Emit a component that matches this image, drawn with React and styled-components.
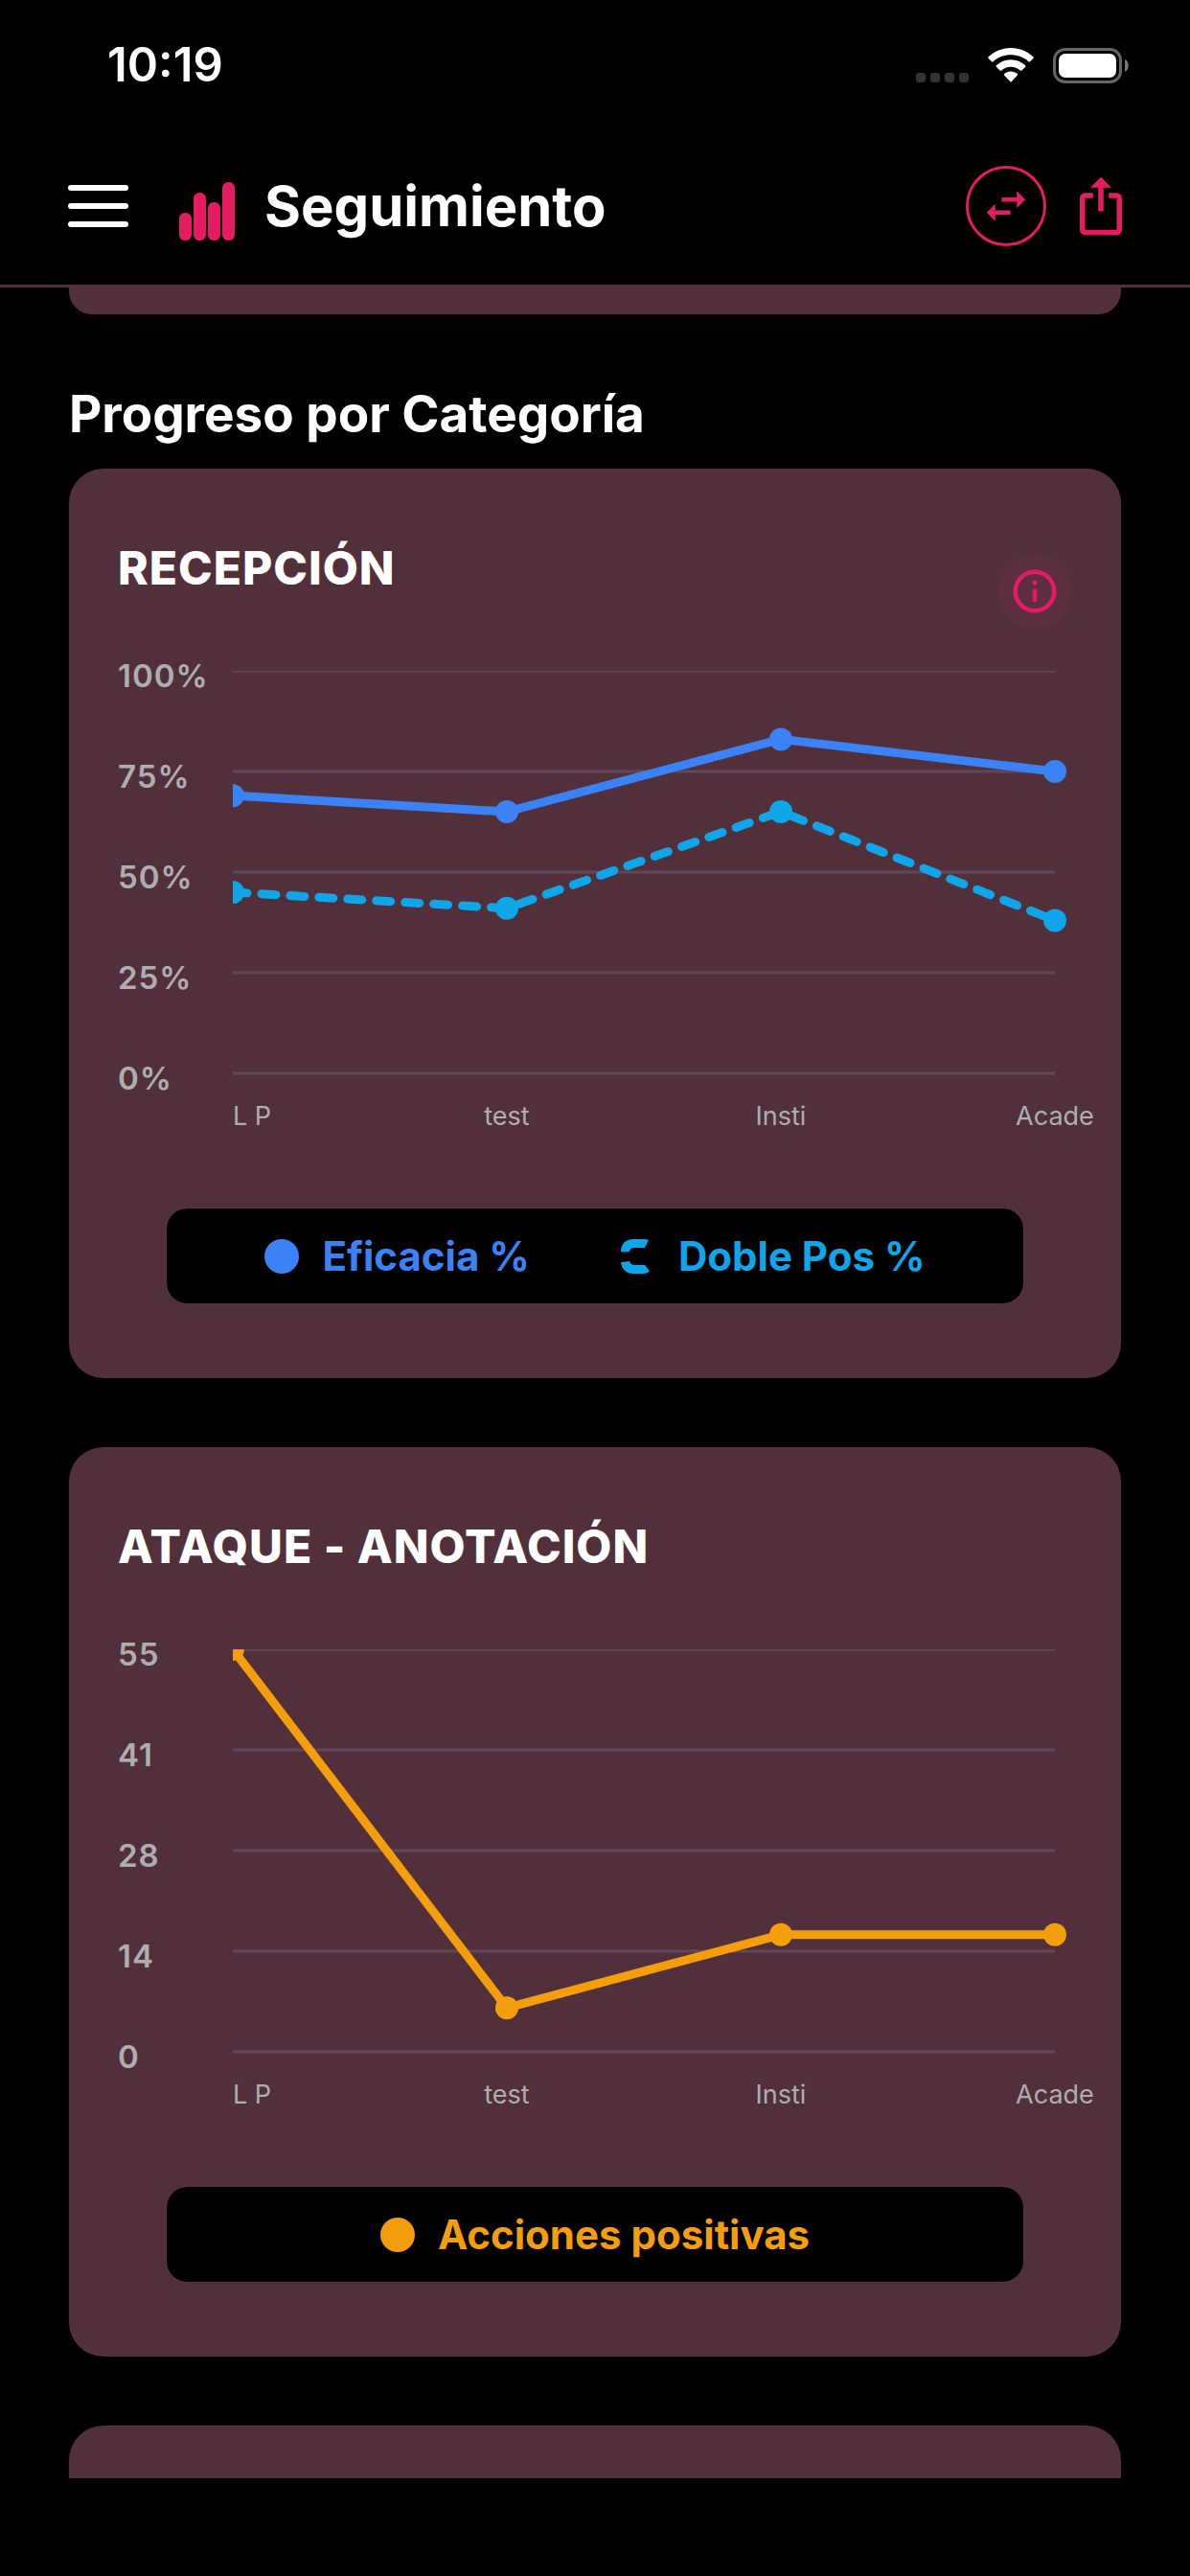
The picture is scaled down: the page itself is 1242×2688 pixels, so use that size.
import React, { useId } from "react";
import styled, { createGlobalStyle } from "styled-components";
import { MdInfoOutline, MdSwapHoriz } from "react-icons/md";

const colors = {
  background: "#000000",
  card: "#51303c",
  accent: "#e31c63",
  accentSoft: "#5d2d40",
  text: "#ffffff",
  label: "#aeaeae",
  grid: "#604858",
  blue: "#3b82f6",
  cyan: "#0ea5e9",
  amber: "#f59e0b",
};

const fonts = {
  primary: "Inter, Roboto, 'Liberation Sans', sans-serif",
};

const GlobalStyle = createGlobalStyle`
  * {
    box-sizing: border-box;
  }
  body {
    margin: 0;
    background: ${colors.background};
    color: ${colors.text};
    font-family: ${fonts.primary};
  }
`;

const Page = styled.div`
  display: flex;
  flex-direction: column;
  min-height: 100vh;
  background: ${colors.background};
`;

const StatusBar = styled.div`
  display: flex;
  align-items: center;
  justify-content: space-between;
  height: 132px;
  padding: 4px 64px 0 112px;
`;

const Time = styled.span`
  font-size: 49px;
  font-weight: 600;
  line-height: 58px;
`;

const StatusIcons = styled.div`
  display: flex;
  align-items: center;
  gap: 20px;
`;

const Header = styled.header`
  display: flex;
  align-items: center;
  justify-content: space-between;
  height: 168px;
  padding: 0 60px;
  border-bottom: 3px solid ${colors.card};
`;

const Brand = styled.div`
  display: flex;
  align-items: center;
`;

const IconButton = styled.button`
  display: flex;
  padding: 0;
  border: none;
  background: none;
  color: ${(p) => p.$color || colors.accent};
  cursor: pointer;
`;

const RoundButton = styled(IconButton)`
  align-items: center;
  justify-content: center;
  width: 84px;
  height: 84px;
  border: 3px solid ${colors.accent};
  border-radius: 50%;
`;

const InfoButton = styled(IconButton)`
  align-self: flex-end;
  align-items: center;
  justify-content: center;
  width: 78px;
  height: 78px;
  border-radius: 50%;
  background: ${colors.accentSoft};
`;

const Logo = styled.svg`
  margin: 0 31px 0 43px;
`;

const Title = styled.h1`
  margin: 0;
  font-size: 58px;
  font-weight: 700;
  line-height: 72px;
`;

const Actions = styled.div`
  display: flex;
  align-items: center;
  gap: 24px;
`;

const Content = styled.main`
  flex: 1;
  display: flex;
  flex-direction: column;
  padding: 0 72px;
`;

const PreviousCard = styled.div`
  height: 28px;
  margin-bottom: 72px;
  border-radius: 0 0 24px 24px;
  background: ${colors.card};
  box-shadow: 0 6px 24px rgba(227, 28, 99, 0.05);
`;

const SectionTitle = styled.h2`
  margin: 0 0 24px;
  font-size: 53px;
  font-weight: 700;
  line-height: 65px;
`;

const Card = styled.section`
  margin-bottom: 72px;
  padding: 75px 51px;
  border-radius: 36px;
  background: ${colors.card};
`;

const NextCard = styled.div`
  flex: 1;
  min-height: 55px;
  border-radius: 36px 36px 0 0;
  background: ${colors.card};
`;

const CardHeader = styled.div`
  display: flex;
  justify-content: space-between;
  min-height: 92px;
`;

const CardTitle = styled.h3`
  margin: 0;
  font-size: 48px;
  font-weight: 800;
  line-height: 58px;
  letter-spacing: 1px;
`;

const ChartSvg = styled.svg`
  display: block;
  width: 100%;
  margin: 34px 0 68px;
  overflow: visible;
`;

const YLabel = styled.text`
  fill: ${colors.label};
  font-size: 33px;
  font-weight: 600;
  letter-spacing: 1px;
`;

const XLabel = styled.text`
  fill: ${colors.label};
  font-size: 27px;
`;

const Legend = styled.ul`
  display: flex;
  align-items: center;
  justify-content: center;
  gap: 95px;
  height: 105px;
  margin: 0 48px;
  padding: 0;
  border: 3px solid ${colors.card};
  border-radius: 24px;
  background: ${colors.background};
  background-clip: padding-box;
  box-shadow: 0 3px 12px rgba(0, 0, 0, 0.06);
  list-style: none;
`;

const LegendItem = styled.li`
  display: flex;
  align-items: center;
  gap: 24px;
  color: ${(p) => p.$color};
  font-size: 42px;
  font-weight: 700;
  line-height: 50px;
`;

const Footer = styled.footer`
  height: 102px;
`;

const MenuIcon = () => (
  <svg width="84" height="84" viewBox="0 0 84 84" fill="currentColor">
    <rect x="11" y="20" width="63" height="6" rx="3" />
    <rect x="11" y="39" width="63" height="6" rx="3" />
    <rect x="11" y="58" width="63" height="6" rx="3" />
  </svg>
);

const BarsLogo = () => (
  <Logo width="58" height="72" viewBox="0 0 58 72" fill={colors.accent} aria-hidden="true">
    <rect x="0" y="43" width="13" height="29" rx="6" />
    <rect x="15" y="22" width="13" height="50" rx="6" />
    <rect x="30" y="32" width="13" height="40" rx="6" />
    <rect x="45" y="11" width="13" height="61" rx="6" />
  </Logo>
);

const ShareIcon = () => (
  <svg width="66" height="66" viewBox="0 0 24 24" fill="currentColor">
    <path d="M12 1L8 5h3v9h2V5h3M18 23H6c-1.11 0-2-.9-2-2V9a2 2 0 0 1 2-2h3v2H6v12h12V9h-3V7h3a2 2 0 0 1 2 2v12a2 2 0 0 1-2 2z" />
  </svg>
);

const SignalIcon = () => (
  <svg width="55" height="37" viewBox="0 0 55 37" fill="#333333">
    <rect x="0" y="26" width="10" height="10" rx="3" />
    <rect x="15" y="26" width="10" height="10" rx="3" />
    <rect x="30" y="26" width="10" height="10" rx="3" />
    <rect x="45" y="26" width="10" height="10" rx="3" />
  </svg>
);

const WifiIcon = () => (
  <svg width="48" height="37" viewBox="0 0 48 37" fill="#fff">
    <path d="M24 0C33 0 41 3.500 47.300 9.200c.6.600.6 1.200 0 1.800l-3.200 3.200c-.5.500-1.200.5-1.700 0C37.500 9.800 31 7.300 24 7.300S10.500 9.800 5.600 14.200c-.5.500-1.200.5-1.700 0L.7 11c-.6-.6-.6-1.200 0-1.800C7 3.500 15 0 24 0z" />
    <path d="M24 12.300c5.800 0 11 2.200 15 5.800.6.600.6 1.200 0 1.800l-3.600 3.600c-.5.500-1.100.5-1.600.1C31.200 21.200 27.800 19.800 24 19.800s-7.200 1.400-9.800 3.800c-.5.400-1.100.4-1.600-.1L9 19.900c-.6-.6-.6-1.200 0-1.800 4-3.600 9.200-5.800 15-5.800z" />
    <path d="M24 24.500c2.600 0 4.900.9 6.700 2.500.6.600.6 1.200 0 1.800l-5.800 6.200c-.5.600-1.300.6-1.800 0l-5.800-6.200c-.6-.6-.6-1.200 0-1.800 1.800-1.600 4.100-2.500 6.700-2.500z" />
  </svg>
);

const BatteryIcon = () => (
  <svg width="79" height="37" viewBox="0 0 79 37">
    <rect x="1.500" y="1.500" width="69" height="34" rx="11" fill="none" stroke="#666" strokeWidth="3" />
    <rect x="6" y="6" width="60" height="25" rx="7" fill="#fff" />
    <path d="M75 12c5 2 5 11 0 13z" fill="#777" />
  </svg>
);

const LegendMark = ({ dashed }) => (
  <svg width="36" height="36" viewBox="0 0 36 36" fill="currentColor" aria-hidden="true">
    {dashed ? (
      <>
        <path d="M0 13.300C0 5 5 0 13 0h10c2.500 0 4.500.3 6 1l-4 8H14c-3 0-5 1.800-5 4.300z" />
        <path d="M0 24.200C1 31.500 6 36 13 36h9c3 0 6-.8 8-2.300L25.200 27H14c-2.500 0-4.300-1.500-5-4z" />
      </>
    ) : (
      <circle cx="18" cy="18" r="18" />
    )}
  </svg>
);

// Plot area inside the chart's own coordinates
const PLOT = { left: 120, top: 10, width: 858, height: 420 };

const Chart = ({ title, max, ticks, labels, series }) => {
  const clipId = useId();
  const step = PLOT.width / (labels.length - 1);
  const x = (i) => PLOT.left + i * step;
  const y = (value) => PLOT.top + PLOT.height * (1 - value / max);

  return (
    <ChartSvg viewBox="0 0 996 500" role="img" aria-label={title}>
      <clipPath id={clipId}>
        <rect x={PLOT.left} y={PLOT.top} width={PLOT.width + 18} height={PLOT.height + 18} />
      </clipPath>
      {ticks.map((tick, i) => (
        <YLabel key={tick} x="0" y={27 + (i * PLOT.height) / (ticks.length - 1)}>
          {tick}
        </YLabel>
      ))}
      <g clipPath={`url(#${clipId})`}>
        {ticks.map((tick, i) => {
          const lineY = PLOT.top + (i * PLOT.height) / (ticks.length - 1);
          return (
            <line
              key={tick}
              x1={PLOT.left}
              x2={PLOT.left + PLOT.width}
              y1={lineY}
              y2={lineY}
              stroke={colors.grid}
              strokeWidth="3"
            />
          );
        })}
        {series.map((s) => (
          <g key={s.name}>
            <polyline
              points={s.values.map((v, i) => `${x(i)},${y(v)}`).join(" ")}
              fill="none"
              stroke={s.color}
              strokeWidth="9"
              strokeLinecap="round"
              strokeLinejoin="round"
              strokeDasharray={s.dashed ? "15 15" : undefined}
            />
            {s.values.map((v, i) => (
              <circle key={i} cx={x(i)} cy={y(v)} r="12" fill={s.color} />
            ))}
          </g>
        ))}
      </g>
      {labels.map((label, i) => (
        <XLabel key={label} x={x(i)} y="484" textAnchor={i === 0 ? "start" : "middle"}>
          {label}
        </XLabel>
      ))}
    </ChartSvg>
  );
};

const ChartCard = ({ title, info, ...chart }) => (
  <Card>
    <CardHeader>
      <CardTitle>{title}</CardTitle>
      {info && (
        <InfoButton type="button" aria-label="Información">
          <MdInfoOutline size={54} />
        </InfoButton>
      )}
    </CardHeader>
    <Chart title={title} {...chart} />
    <Legend>
      {chart.series.map((s) => (
        <LegendItem key={s.name} $color={s.color}>
          <LegendMark dashed={s.dashed} />
          {s.name}
        </LegendItem>
      ))}
    </Legend>
  </Card>
);

const matches = ["L P", "test", "Insti", "Acade"];

const charts = [
  {
    title: "RECEPCIÓN",
    info: true,
    max: 100,
    ticks: ["100%", "75%", "50%", "25%", "0%"],
    series: [
      { name: "Eficacia %", color: colors.blue, values: [69, 65, 83, 75] },
      { name: "Doble Pos %", color: colors.cyan, values: [45, 41, 65, 38], dashed: true },
    ],
  },
  {
    title: "ATAQUE - ANOTACIÓN",
    max: 55,
    ticks: ["55", "41", "28", "14", "0"],
    series: [{ name: "Acciones positivas", color: colors.amber, values: [55, 6, 16, 16] }],
  },
];

const App = () => (
  <>
    <GlobalStyle />
    <Page>
      <StatusBar>
        <Time>10:19</Time>
        <StatusIcons>
          <SignalIcon />
          <WifiIcon />
          <BatteryIcon />
        </StatusIcons>
      </StatusBar>
      <Header>
        <Brand>
          <IconButton type="button" aria-label="Menú" $color={colors.text}>
            <MenuIcon />
          </IconButton>
          <BarsLogo />
          <Title>Seguimiento</Title>
        </Brand>
        <Actions>
          <RoundButton type="button" aria-label="Cambiar">
            <MdSwapHoriz size={54} />
          </RoundButton>
          <IconButton type="button" aria-label="Compartir">
            <ShareIcon />
          </IconButton>
        </Actions>
      </Header>
      <Content>
        <PreviousCard />
        <SectionTitle>Progreso por Categoría</SectionTitle>
        {charts.map((chart) => (
          <ChartCard key={chart.title} labels={matches} {...chart} />
        ))}
        <NextCard />
      </Content>
      <Footer />
    </Page>
  </>
);

export default App;
